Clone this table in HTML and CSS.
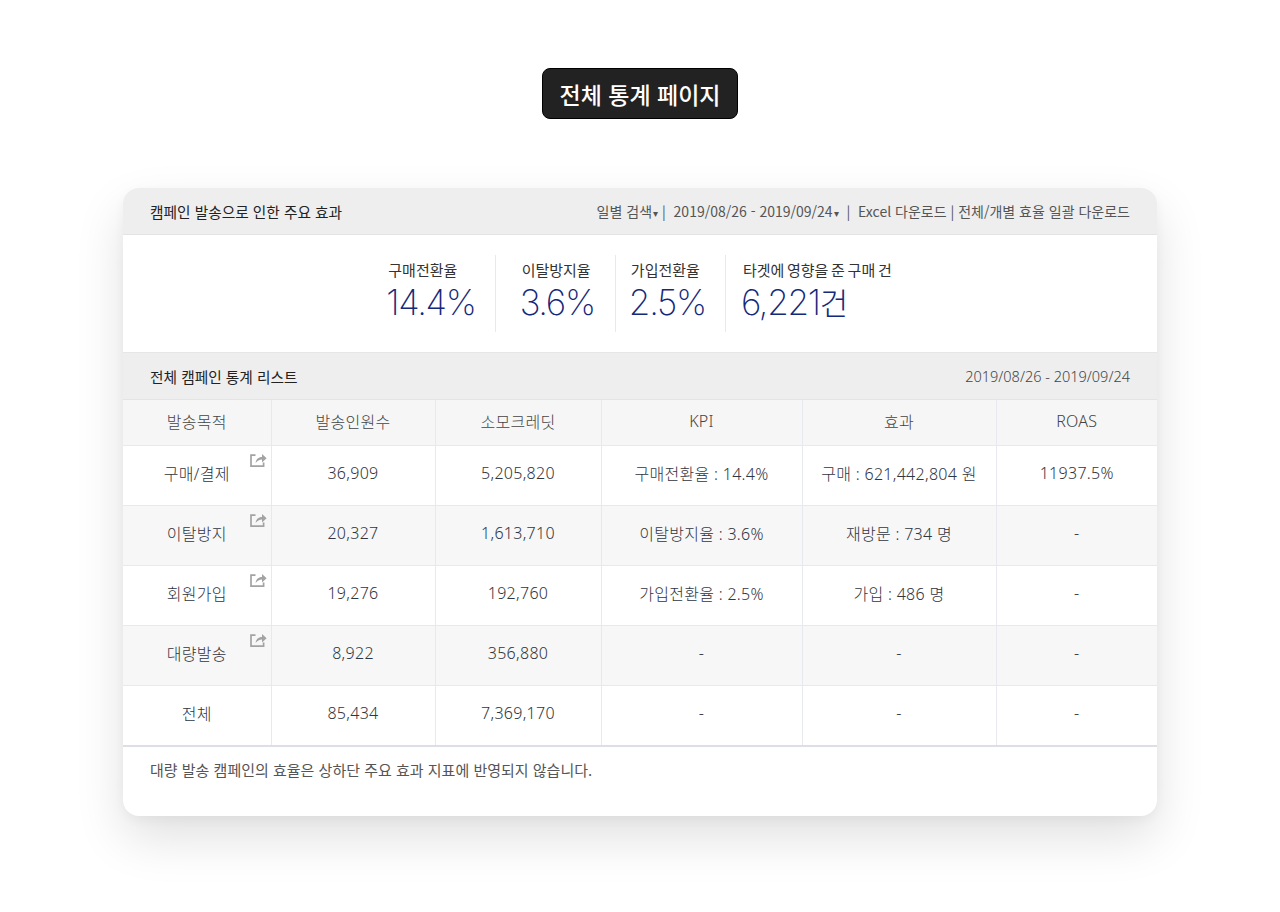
FILE: index.html
```html
<!DOCTYPE html>
<html lang="ko">
<head>
<meta charset="utf-8">
<title>전체 통계 페이지</title>
<link rel="stylesheet" href="styles.css">
</head>
<body>
<div class="page">
  <div class="title-wrap"><h1 class="page-title">전체 통계 페이지</h1></div>
  <div class="card">
    <div class="bar">
      <span class="bar-title">캠페인 발송으로 인한 주요 효과</span>
      <span class="bar-links">일별 검색<span class="caret">▾</span> | &nbsp;2019/08/26 - 2019/09/24<span class="caret">▾</span> &nbsp;| &nbsp;Excel 다운로드 | 전체/개별 효율 일괄 다운로드</span>
    </div>
    <div class="stats">
      <div class="stat s1">
        <div class="stat-label">구매전환율</div>
        <div class="stat-value">14.4%</div>
      </div>
      <div class="stat s2">
        <div class="stat-label">이탈방지율</div>
        <div class="stat-value">3.6%</div>
      </div>
      <div class="stat s3">
        <div class="stat-label">가입전환율</div>
        <div class="stat-value">2.5%</div>
      </div>
      <div class="stat s4">
        <div class="stat-label">타겟에 영향을 준 구매 건</div>
        <div class="stat-value">6,221<span class="unit">건</span></div>
      </div>
    </div>
    <div class="bar bar-list">
      <span class="bar-title">전체 캠페인 통계 리스트</span>
      <span class="bar-date">2019/08/26 - 2019/09/24</span>
    </div>
    <table class="stats-table">
      <colgroup>
        <col class="c1"><col class="c2"><col class="c3"><col class="c4"><col class="c5"><col class="c6">
      </colgroup>
      <thead>
        <tr><th>발송목적</th><th>발송인원수</th><th>소모크레딧</th><th>KPI</th><th>효과</th><th>ROAS</th></tr>
      </thead>
      <tbody>
        <tr>
          <td class="purpose">구매/결제<svg class="share" viewBox="0 0 18 16"><path d="M6.5 3.2H2V14.2H14.6V10.5" fill="none" stroke="#a3a3a3" stroke-width="1.7"/><path d="M6.6 11C6.9 7.2 9.6 5 13 5V2L17.6 6.3L13 10.6V7.6C10.4 7.6 8.3 8.8 6.6 11Z" fill="#a3a3a3"/></svg></td>
          <td>36,909</td><td>5,205,820</td><td>구매전환율 : 14.4%</td><td>구매 : 621,442,804 원</td><td>11937.5%</td>
        </tr>
        <tr class="alt">
          <td class="purpose">이탈방지<svg class="share" viewBox="0 0 18 16"><path d="M6.5 3.2H2V14.2H14.6V10.5" fill="none" stroke="#a3a3a3" stroke-width="1.7"/><path d="M6.6 11C6.9 7.2 9.6 5 13 5V2L17.6 6.3L13 10.6V7.6C10.4 7.6 8.3 8.8 6.6 11Z" fill="#a3a3a3"/></svg></td>
          <td>20,327</td><td>1,613,710</td><td>이탈방지율 : 3.6%</td><td>재방문 : 734 명</td><td>-</td>
        </tr>
        <tr>
          <td class="purpose">회원가입<svg class="share" viewBox="0 0 18 16"><path d="M6.5 3.2H2V14.2H14.6V10.5" fill="none" stroke="#a3a3a3" stroke-width="1.7"/><path d="M6.6 11C6.9 7.2 9.6 5 13 5V2L17.6 6.3L13 10.6V7.6C10.4 7.6 8.3 8.8 6.6 11Z" fill="#a3a3a3"/></svg></td>
          <td>19,276</td><td>192,760</td><td>가입전환율 : 2.5%</td><td>가입 : 486 명</td><td>-</td>
        </tr>
        <tr class="alt">
          <td class="purpose">대량발송<svg class="share" viewBox="0 0 18 16"><path d="M6.5 3.2H2V14.2H14.6V10.5" fill="none" stroke="#a3a3a3" stroke-width="1.7"/><path d="M6.6 11C6.9 7.2 9.6 5 13 5V2L17.6 6.3L13 10.6V7.6C10.4 7.6 8.3 8.8 6.6 11Z" fill="#a3a3a3"/></svg></td>
          <td>8,922</td><td>356,880</td><td>-</td><td>-</td><td>-</td>
        </tr>
        <tr class="total">
          <td>전체</td><td>85,434</td><td>7,369,170</td><td>-</td><td>-</td><td>-</td>
        </tr>
      </tbody>
    </table>
    <p class="note">대량 발송 캠페인의 효율은 상하단 주요 효과 지표에 반영되지 않습니다.</p>
  </div>
</div>
</body>
</html>
```
FILE: styles.css
```css
html, body {
  margin: 0;
  padding: 0;
  background: #ffffff;
}
body {
  font-family: "Noto Sans CJK KR", "Noto Sans", sans-serif;
  color: #333;
}
.page {
  padding-top: 68px;
  padding-bottom: 96px;
}
.title-wrap {
  display: flex;
  justify-content: center;
}
.page-title {
  margin: 0;
  height: 49px;
  padding: 0 16px;
  display: flex;
  align-items: center;
  background: #222222;
  border: 1px solid #000;
  border-radius: 8px;
  color: #fff;
  font-size: 23px;
  font-weight: 500;
}
.card {
  width: 1034px;
  margin: 69px auto 0;
  background: #fff;
  border-radius: 16px;
  overflow: hidden;
  box-shadow: 0 22px 50px rgba(0, 0, 0, 0.12), 0 4px 12px rgba(0, 0, 0, 0.04);
}
.bar {
  height: 46px;
  padding: 0 27px;
  display: flex;
  align-items: center;
  justify-content: space-between;
  background: #eeeeee;
  border-bottom: 1px solid #e4e4e4;
}
.bar-title {
  font-size: 14.7px;
  font-weight: 400;
  color: #222;
}
.bar-links {
  font-size: 14px;
  color: #555;
}
.bar-date {
  font-family: "Noto Sans", "Noto Sans CJK KR", sans-serif;
  font-weight: 300;
  font-size: 14.5px;
  color: #444;
}
.caret {
  font-size: 10px;
  margin-left: 1px;
}
.stats {
  display: flex;
  justify-content: center;
  padding: 20px 0;
  height: 77px;
}
.stat {
  border-left: 1px solid #e8e9ef;
  display: flex;
  flex-direction: column;
}
.s1 { border-left: 0; padding: 0 19px 0 0; }
.s2 { padding: 0 20px 0 26px; }
.s3 { padding: 0 19px 0 15px; }
.s4 { padding: 0 0 0 17px; }
.stat-label {
  font-size: 15px;
  color: #333;
  line-height: 20px;
  margin-top: 5px;
}
.s4 .stat-label {
  word-spacing: -1.5px;
}
.stat-value {
  font-family: "Inter", sans-serif;
  font-weight: 200;
  font-size: 35px;
  letter-spacing: -1.3px;
  line-height: 44px;
  color: #15287a;
  margin-left: -2px;
}
.unit {
  font-family: "Noto Sans CJK KR", sans-serif;
  font-weight: 300;
  font-size: 31px;
  letter-spacing: 0;
  margin-left: 0;
}
.bar-list {
  height: 46px;
  border-top: 1px solid #e6e6e6;
}
.stats-table {
  width: 100%;
  border-collapse: collapse;
  table-layout: fixed;
  font-family: "Noto Sans", "Noto Sans CJK KR", sans-serif;
  font-weight: 300;
  font-size: 16px;
  letter-spacing: 0.3px;
}
.c1 { width: 148px; }
.c2 { width: 164px; }
.c3 { width: 166px; }
.c4 { width: 201px; }
.c5 { width: 194px; }
.c6 { width: 161px; }
.stats-table th, .stats-table td {
  text-align: center;
  border-left: 1px solid #e7e9ee;
  border-bottom: 1px solid #e7e9ee;
  padding: 0 0 3px;
  color: #2f3542;
}
.stats-table th:first-child, .stats-table td:first-child {
  border-left: 0;
}
.stats-table th {
  height: 42px;
  background: #f6f6f6;
  font-weight: 300;
  color: #444;
}
.stats-table td {
  height: 54px;
  padding-bottom: 5px;
}
.stats-table tr.alt td {
  background: #f7f7f7;
}
.stats-table tr.total td {
  border-bottom: 2px solid #dcdfe3;
}
.purpose {
  position: relative;
}
.share {
  position: absolute;
  top: 6px;
  right: 4px;
  width: 18px;
  height: 16px;
}
.note {
  margin: 0;
  padding: 13px 27px 36px;
  font-size: 15px;
  line-height: 20px;
  color: #555;
}
```
